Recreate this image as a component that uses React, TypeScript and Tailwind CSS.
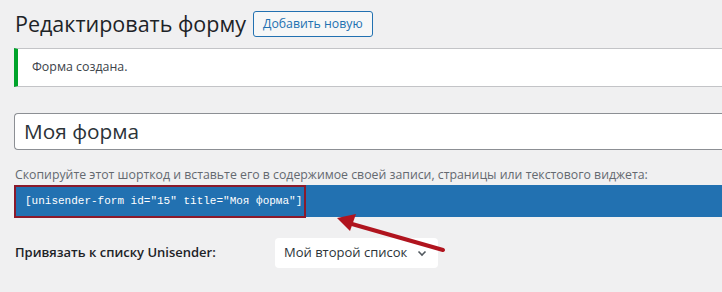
export default function App() {
  return (
    <div className="w-[722px] h-[292px] overflow-hidden bg-[#f0f0f1] pl-[14px] text-[#1d2327] font-['Open_Sans','Noto_Sans',sans-serif] relative">
      <div className="flex items-center gap-[7px] pt-[11px] h-[37px]">
        <h1 className="pl-px text-[21.5px] leading-[26px] font-normal text-[#1d2327]">Редактировать форму</h1>
        <button className="h-[26px] px-[9px] border border-[#2271b1] rounded-[3px] text-[12.3px] text-[#2271b1] bg-[#f6f7f7] leading-none">
          Добавить новую
        </button>
      </div>

      <div className="mt-[11px] h-[39px] bg-white border-y border-[#c3c4c7] border-l-4 border-l-[#00a32a] flex items-center pl-[14px]">
        <p className="text-[12.4px] text-[#3c434a]">Форма создана.</p>
      </div>

      <div className="mt-[26px] h-[37px] bg-white border border-[#8c8f94] border-r-0 rounded-l-[4px] flex items-center pl-[9px]">
        <span className="text-[20.8px] text-[#2c3338] leading-none">Моя форма</span>
      </div>

      <p className="mt-[16px] pl-px text-[12.3px] leading-[18px] text-[#646970]">
        Скопируйте этот шорткод и вставьте его в содержимое своей записи, страницы или текстового виджета:
      </p>

      <div className="mt-[1px] h-[32px] bg-[#2271b1] flex items-center">
        <div className="h-[33px] w-[292px] border-2 border-[#8b1a2b] flex items-center pl-[9px] text-white font-['Liberation_Mono','DejaVu_Sans_Mono',monospace] text-[11px]">
          [unisender-form id="15" title="Моя форма"]
        </div>
      </div>

      <div className="mt-[21px] flex items-center">
        <span className="w-[261px] pl-px text-[13px] font-semibold text-[#1d2327]">Привязать к списку Unisender:</span>
        <div className="h-[30px] w-[163px] bg-white rounded-[4px] flex items-center justify-between pl-[9px] pr-[10px] text-[13px] text-[#2c3338]">
          <span>Мой второй список</span>
          <svg width="12" height="12" viewBox="0 0 12 12" fill="none" stroke="#50575e" strokeWidth="1.6">
            <path d="M2.5 4.5 L6 8 L9.5 4.5" />
          </svg>
        </div>
      </div>

      <svg className="absolute left-0 top-0" width="722" height="292" viewBox="0 0 722 292">
        <line x1="443" y1="250" x2="352" y2="224" stroke="#b0141e" strokeWidth="4" strokeLinecap="round" />
        <path d="M337 218 L356 214 L350 231 Z" fill="#b0141e" />
      </svg>
    </div>
  );
}
